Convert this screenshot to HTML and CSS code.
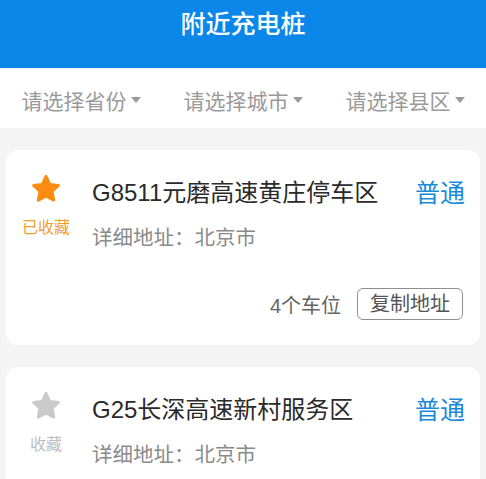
FILE: index.html
```html
<!DOCTYPE html>
<html lang="zh-CN">
<head>
<meta charset="utf-8">
<title>附近充电桩</title>
<link rel="stylesheet" href="styles.css">
</head>
<body>
<header class="topbar">
  <h1 class="topbar-title">附近充电桩</h1>
</header>
<nav class="filters">
  <div class="filter"><span>请选择省份</span><i class="caret"></i></div>
  <div class="filter"><span>请选择城市</span><i class="caret"></i></div>
  <div class="filter"><span>请选择县区</span><i class="caret"></i></div>
</nav>
<main class="list">
  <section class="card">
    <div class="fav fav-on">
      <svg class="star" viewBox="0 0 24 24" aria-hidden="true"><path d="M12 3.2l2.6 5.6 6.1.7-4.5 4.2 1.2 6.1L12 16.8l-5.4 3 1.2-6.1-4.5-4.2 6.1-.7z"/></svg>
      <span class="fav-label">已收藏</span>
    </div>
    <div class="info">
      <div class="title-row">
        <h2 class="name">G8511元磨高速黄庄停车区</h2>
        <span class="type">普通</span>
      </div>
      <p class="addr">详细地址：北京市</p>
      <div class="actions">
        <span class="slots">4个车位</span>
        <button class="copy">复制地址</button>
      </div>
    </div>
  </section>
  <section class="card">
    <div class="fav fav-off">
      <svg class="star" viewBox="0 0 24 24" aria-hidden="true"><path d="M12 3.2l2.6 5.6 6.1.7-4.5 4.2 1.2 6.1L12 16.8l-5.4 3 1.2-6.1-4.5-4.2 6.1-.7z"/></svg>
      <span class="fav-label">收藏</span>
    </div>
    <div class="info">
      <div class="title-row">
        <h2 class="name">G25长深高速新村服务区</h2>
        <span class="type">普通</span>
      </div>
      <p class="addr">详细地址：北京市</p>
      <div class="actions">
        <span class="slots">4个车位</span>
        <button class="copy">复制地址</button>
      </div>
    </div>
  </section>
</main>
</body>
</html>
```
FILE: styles.css
```css
* { box-sizing: border-box; }
html, body {
  margin: 0;
  padding: 0;
}
body {
  background: #f4f4f4;
  font-family: "Liberation Sans", "Noto Sans CJK SC", sans-serif;
  overflow: hidden;
}
.topbar {
  background: #0b87ea;
  height: 68px;
}
.topbar-title {
  margin: 0;
  color: #fff;
  font-size: 25px;
  font-weight: 500;
  line-height: 48px;
  text-align: center;
}
.filters {
  display: flex;
  height: 60px;
  background: #fff;
}
.filter {
  flex: 1;
  display: flex;
  align-items: center;
  justify-content: center;
  color: #9a9a9a;
  font-size: 21px;
  padding-top: 4px;
}
.caret {
  display: inline-block;
  width: 0;
  height: 0;
  margin-left: 4px;
  border-left: 5px solid transparent;
  border-right: 5px solid transparent;
  border-top: 6px solid #9a9a9a;
}
.list {
  display: flex;
  flex-direction: column;
  gap: 22px;
  padding: 22px 6px;
}
.card {
  display: flex;
  background: #fff;
  border-radius: 12px;
  padding: 0 15px 25px 0;
}
.fav {
  width: 80px;
  flex: none;
  display: flex;
  flex-direction: column;
  align-items: center;
  padding-top: 22px;
}
.star {
  width: 36px;
  height: 34px;
  display: block;
}
.star path {
  stroke-width: 2.2;
  stroke-linejoin: round;
}
.fav-on .star path { fill: #fb8c12; stroke: #fb8c12; }
.fav-off .star path { fill: #cacaca; stroke: #cacaca; }
.fav-label {
  font-size: 16px;
  line-height: 20px;
  margin-top: 12px;
}
.fav-on .fav-label { color: #ef9f2c; }
.fav-off .fav-label { color: #bdbdbd; }
.info {
  flex: 1;
  margin-left: 6px;
  padding-top: 28px;
}
.title-row {
  display: flex;
  justify-content: space-between;
  align-items: center;
  height: 30px;
}
.name {
  margin: 0;
  font-size: 24px;
  font-weight: 400;
  color: #2a2a2a;
  line-height: 30px;
}
.type {
  font-size: 25px;
  color: #1a8ad8;
  line-height: 30px;
}
.addr {
  margin: 16px 0 0;
  font-size: 20.5px;
  line-height: 28px;
  color: #8a8a8a;
}
.actions {
  display: flex;
  justify-content: flex-end;
  align-items: center;
  gap: 16px;
  margin-top: 36px;
  padding-right: 2px;
}
.slots {
  font-size: 20px;
  color: #666;
}
.copy {
  font-family: inherit;
  font-size: 20px;
  color: #555;
  background: #fff;
  border: 1.5px solid #8e8e8e;
  border-radius: 6px;
  height: 32px;
  padding: 0 12px;
  line-height: 28px;
}
```
